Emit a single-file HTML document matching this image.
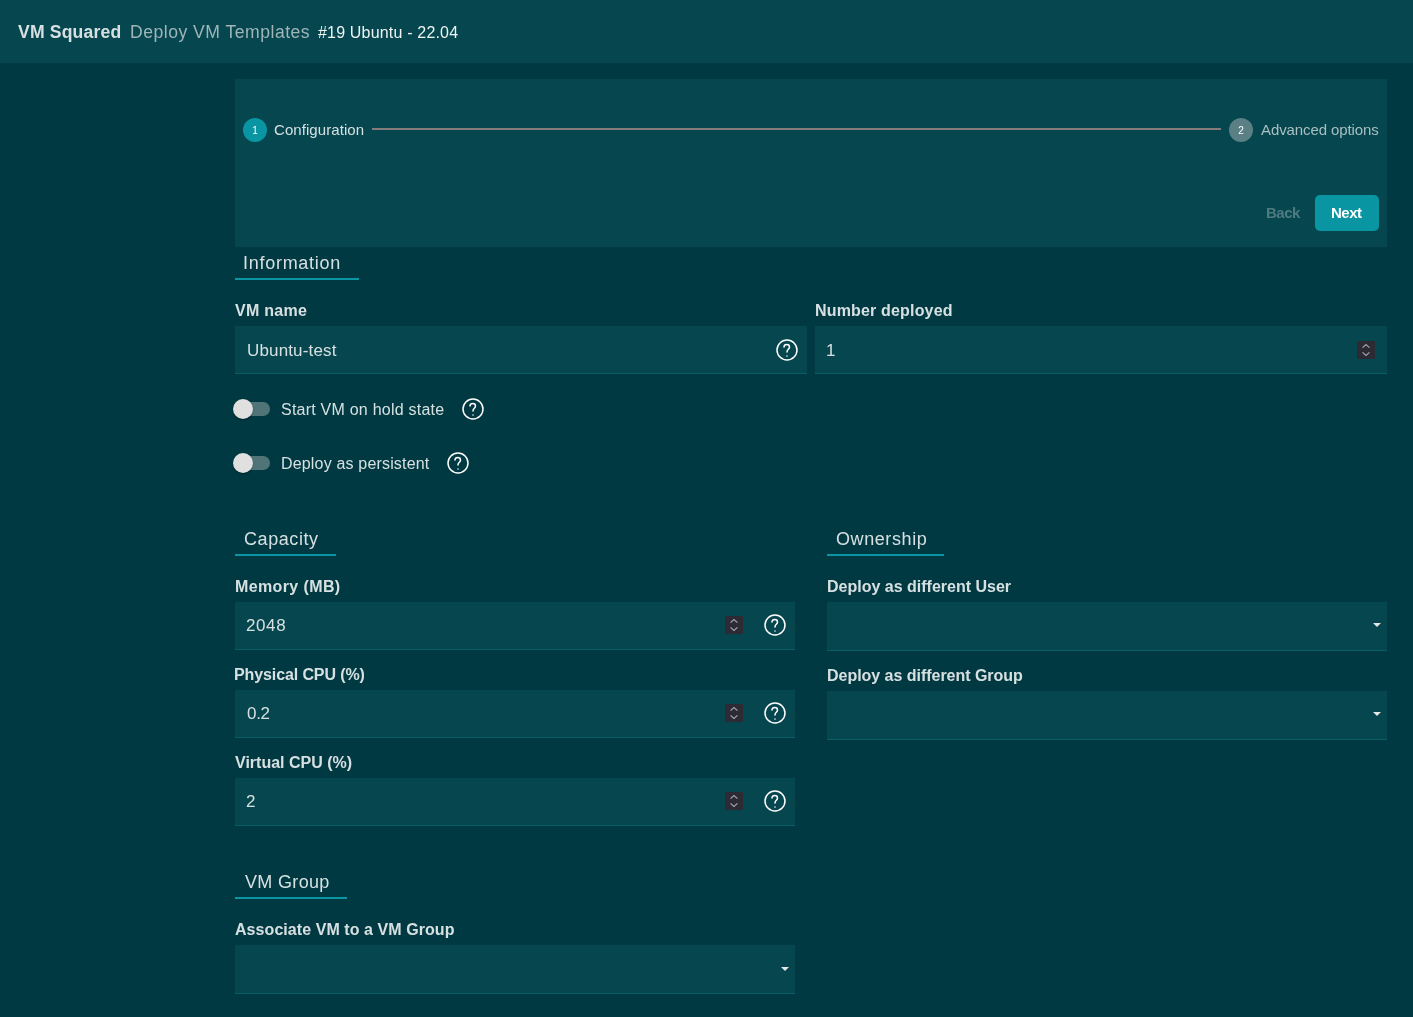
<!DOCTYPE html>
<html><head><meta charset="utf-8">
<style>
*{box-sizing:border-box;margin:0;padding:0}
html,body{width:1413px;height:1017px;overflow:hidden;background:#013943;font-family:"Liberation Sans",sans-serif;color:#d7e0e1}
.t,.abs{position:absolute;white-space:nowrap}
.t,.circ{will-change:transform}
.inp{position:absolute;background:#05464f;border-bottom:1px solid #085e65}
.uline{position:absolute;height:2px;background:#0a95a2}
.arrow{position:absolute;width:0;height:0;border-left:4.5px solid transparent;border-right:4.5px solid transparent;border-top:4.5px solid #e6e6e6}
.track{position:absolute;width:35px;height:14px;border-radius:7px;background:#507478}
.thumb{position:absolute;width:20px;height:20px;border-radius:50%;background:#e0e0e0;box-shadow:0 2px 1px -1px rgba(0,0,0,.2),0 1px 1px 0 rgba(0,0,0,.14),0 1px 3px 0 rgba(0,0,0,.12)}
.circ{position:absolute;width:24px;height:24px;border-radius:50%;color:#fff;font-size:10px;text-align:center;line-height:24px}
</style></head><body>
<div class="abs" style="left:0;top:0;width:1413px;height:63px;background:#05464f"></div>
<div class="abs" style="left:235px;top:79px;width:1152px;height:168px;background:#05464f"></div>
<div class="circ" style="left:243px;top:118px;background:#0a95a2;line-height:26px">1</div>
<div class="abs" style="left:372px;top:128px;width:849px;height:2px;background:#857b7a"></div>
<div class="circ" style="left:1229px;top:118px;background:#5a8085;line-height:26px">2</div>
<div class="abs" style="left:1315px;top:195px;width:64px;height:36px;border-radius:5px;background:#0a95a2"></div>
<div class="uline" style="left:235px;top:278px;width:124px"></div>
<div class="inp" style="left:235px;top:326px;width:572px;height:48px"></div>
<div class="inp" style="left:815px;top:326px;width:572px;height:48px"></div>
<div class="track" style="left:235px;top:402px"></div>
<div class="thumb" style="left:233px;top:399px"></div>
<div class="track" style="left:235px;top:456px"></div>
<div class="thumb" style="left:233px;top:453px"></div>
<div class="uline" style="left:235px;top:554px;width:101px"></div>
<div class="inp" style="left:235px;top:602px;width:560px;height:48px"></div>
<div class="inp" style="left:235px;top:690px;width:560px;height:48px"></div>
<div class="inp" style="left:235px;top:778px;width:560px;height:48px"></div>
<div class="uline" style="left:827px;top:554px;width:117px"></div>
<div class="inp" style="left:827px;top:602px;width:560px;height:49px"></div>
<div class="arrow" style="left:1373px;top:623px"></div>
<div class="inp" style="left:827px;top:691px;width:560px;height:49px"></div>
<div class="arrow" style="left:1373px;top:712px"></div>
<div class="uline" style="left:235px;top:897px;width:112px"></div>
<div class="inp" style="left:235px;top:945px;width:560px;height:49px"></div>
<div class="arrow" style="left:781px;top:967px"></div>
<svg class="abs" style="left:775px;top:338px" width="24" height="24" viewBox="0 0 24 24" fill="none" stroke="#fff" stroke-width="1.5" stroke-linecap="round" stroke-linejoin="round"><circle cx="12" cy="12" r="10"/><path d="M9 9C9 5.5 14.5 5.5 14.5 9C14.5 11.5 12 11 12 14"/><path d="M12 18.01L12.01 17.999"/></svg>
<svg class="abs" style="left:1357px;top:341px" width="18" height="18" viewBox="0 0 18 18"><rect width="18" height="18" fill="#2c2a33"/><path d="M5.5 6.6L9 3.6L12.5 6.6M5.5 11.4L9 14.4L12.5 11.4" fill="none" stroke="#a8a2b6" stroke-width="1.2"/></svg>
<svg class="abs" style="left:461px;top:397px" width="24" height="24" viewBox="0 0 24 24" fill="none" stroke="#fff" stroke-width="1.5" stroke-linecap="round" stroke-linejoin="round"><circle cx="12" cy="12" r="10"/><path d="M9 9C9 5.5 14.5 5.5 14.5 9C14.5 11.5 12 11 12 14"/><path d="M12 18.01L12.01 17.999"/></svg>
<svg class="abs" style="left:446px;top:451px" width="24" height="24" viewBox="0 0 24 24" fill="none" stroke="#fff" stroke-width="1.5" stroke-linecap="round" stroke-linejoin="round"><circle cx="12" cy="12" r="10"/><path d="M9 9C9 5.5 14.5 5.5 14.5 9C14.5 11.5 12 11 12 14"/><path d="M12 18.01L12.01 17.999"/></svg>
<svg class="abs" style="left:725px;top:616px" width="18" height="18" viewBox="0 0 18 18"><rect width="18" height="18" fill="#2c2a33"/><path d="M5.5 6.6L9 3.6L12.5 6.6M5.5 11.4L9 14.4L12.5 11.4" fill="none" stroke="#a8a2b6" stroke-width="1.2"/></svg>
<svg class="abs" style="left:763px;top:613px" width="24" height="24" viewBox="0 0 24 24" fill="none" stroke="#fff" stroke-width="1.5" stroke-linecap="round" stroke-linejoin="round"><circle cx="12" cy="12" r="10"/><path d="M9 9C9 5.5 14.5 5.5 14.5 9C14.5 11.5 12 11 12 14"/><path d="M12 18.01L12.01 17.999"/></svg>
<svg class="abs" style="left:725px;top:704px" width="18" height="18" viewBox="0 0 18 18"><rect width="18" height="18" fill="#2c2a33"/><path d="M5.5 6.6L9 3.6L12.5 6.6M5.5 11.4L9 14.4L12.5 11.4" fill="none" stroke="#a8a2b6" stroke-width="1.2"/></svg>
<svg class="abs" style="left:763px;top:701px" width="24" height="24" viewBox="0 0 24 24" fill="none" stroke="#fff" stroke-width="1.5" stroke-linecap="round" stroke-linejoin="round"><circle cx="12" cy="12" r="10"/><path d="M9 9C9 5.5 14.5 5.5 14.5 9C14.5 11.5 12 11 12 14"/><path d="M12 18.01L12.01 17.999"/></svg>
<svg class="abs" style="left:725px;top:792px" width="18" height="18" viewBox="0 0 18 18"><rect width="18" height="18" fill="#2c2a33"/><path d="M5.5 6.6L9 3.6L12.5 6.6M5.5 11.4L9 14.4L12.5 11.4" fill="none" stroke="#a8a2b6" stroke-width="1.2"/></svg>
<svg class="abs" style="left:763px;top:789px" width="24" height="24" viewBox="0 0 24 24" fill="none" stroke="#fff" stroke-width="1.5" stroke-linecap="round" stroke-linejoin="round"><circle cx="12" cy="12" r="10"/><path d="M9 9C9 5.5 14.5 5.5 14.5 9C14.5 11.5 12 11 12 14"/><path d="M12 18.01L12.01 17.999"/></svg>
<div class="t" style="left:18.19px;top:24.00px;font-size:17.6px;line-height:17.6px;font-weight:700;color:#d7e0e1;letter-spacing:0.170px">VM Squared</div>
<div class="t" style="left:130.00px;top:24.00px;font-size:17.6px;line-height:17.6px;font-weight:400;color:#9fb5b8;letter-spacing:0.489px">Deploy VM Templates</div>
<div class="t" style="left:317.80px;top:25.00px;font-size:16px;line-height:16px;font-weight:400;color:#eef2f2;letter-spacing:0.182px">#19 Ubuntu - 22.04</div>
<div class="t" style="left:274.32px;top:122.00px;font-size:15px;line-height:15px;font-weight:400;color:#d7e0e1;letter-spacing:0.067px">Configuration</div>
<div class="t" style="left:1260.80px;top:122.00px;font-size:15px;line-height:15px;font-weight:400;color:#a9bfc1;letter-spacing:-0.099px">Advanced options</div>
<div class="t" style="left:1265.54px;top:205.00px;font-size:15px;line-height:15px;font-weight:700;color:#4f7a80;letter-spacing:-0.500px">Back</div>
<div class="t" style="left:1330.64px;top:205.00px;font-size:15px;line-height:15px;font-weight:700;color:#ffffff;letter-spacing:-0.513px">Next</div>
<div class="t" style="left:243.18px;top:254.00px;font-size:18px;line-height:18px;font-weight:400;color:#d7e0e1;letter-spacing:0.722px">Information</div>
<div class="t" style="left:243.82px;top:530.00px;font-size:18px;line-height:18px;font-weight:400;color:#d7e0e1;letter-spacing:0.569px">Capacity</div>
<div class="t" style="left:835.50px;top:530.00px;font-size:18px;line-height:18px;font-weight:400;color:#d7e0e1;letter-spacing:0.588px">Ownership</div>
<div class="t" style="left:244.76px;top:873.00px;font-size:18px;line-height:18px;font-weight:400;color:#d7e0e1;letter-spacing:0.326px">VM Group</div>
<div class="t" style="left:235.12px;top:303.00px;font-size:16px;line-height:16px;font-weight:700;color:#d7e0e1;letter-spacing:0.263px">VM name</div>
<div class="t" style="left:814.64px;top:303.00px;font-size:16px;line-height:16px;font-weight:700;color:#d7e0e1;letter-spacing:0.170px">Number deployed</div>
<div class="t" style="left:234.64px;top:579.00px;font-size:16px;line-height:16px;font-weight:700;color:#d7e0e1;letter-spacing:0.384px">Memory (MB)</div>
<div class="t" style="left:234.32px;top:667.00px;font-size:16px;line-height:16px;font-weight:700;color:#d7e0e1;letter-spacing:-0.108px">Physical CPU (%)</div>
<div class="t" style="left:235.12px;top:755.00px;font-size:16px;line-height:16px;font-weight:700;color:#d7e0e1;letter-spacing:0.000px">Virtual CPU (%)</div>
<div class="t" style="left:826.68px;top:579.00px;font-size:16px;line-height:16px;font-weight:700;color:#d7e0e1;letter-spacing:0.001px">Deploy as different User</div>
<div class="t" style="left:826.68px;top:668.00px;font-size:16px;line-height:16px;font-weight:700;color:#d7e0e1;letter-spacing:-0.028px">Deploy as different Group</div>
<div class="t" style="left:235.12px;top:922.00px;font-size:16px;line-height:16px;font-weight:700;color:#d7e0e1;letter-spacing:0.065px">Associate VM to a VM Group</div>
<div class="t" style="left:246.50px;top:342.00px;font-size:17px;line-height:17px;font-weight:400;color:#d7e0e1;letter-spacing:0.147px">Ubuntu-test</div>
<div class="t" style="left:825.86px;top:342.00px;font-size:17px;line-height:17px;font-weight:400;color:#d7e0e1;letter-spacing:0.000px">1</div>
<div class="t" style="left:246.32px;top:617.00px;font-size:17px;line-height:17px;font-weight:400;color:#d7e0e1;letter-spacing:0.607px">2048</div>
<div class="t" style="left:247.48px;top:705.00px;font-size:17px;line-height:17px;font-weight:400;color:#d7e0e1;letter-spacing:-0.315px">0.2</div>
<div class="t" style="left:246.32px;top:793.00px;font-size:17px;line-height:17px;font-weight:400;color:#d7e0e1;letter-spacing:0.000px">2</div>
<div class="t" style="left:281.46px;top:402.00px;font-size:16px;line-height:16px;font-weight:400;color:#d7e0e1;letter-spacing:0.227px">Start VM on hold state</div>
<div class="t" style="left:281.36px;top:456.00px;font-size:16px;line-height:16px;font-weight:400;color:#d7e0e1;letter-spacing:0.172px">Deploy as persistent</div>
</body></html>
